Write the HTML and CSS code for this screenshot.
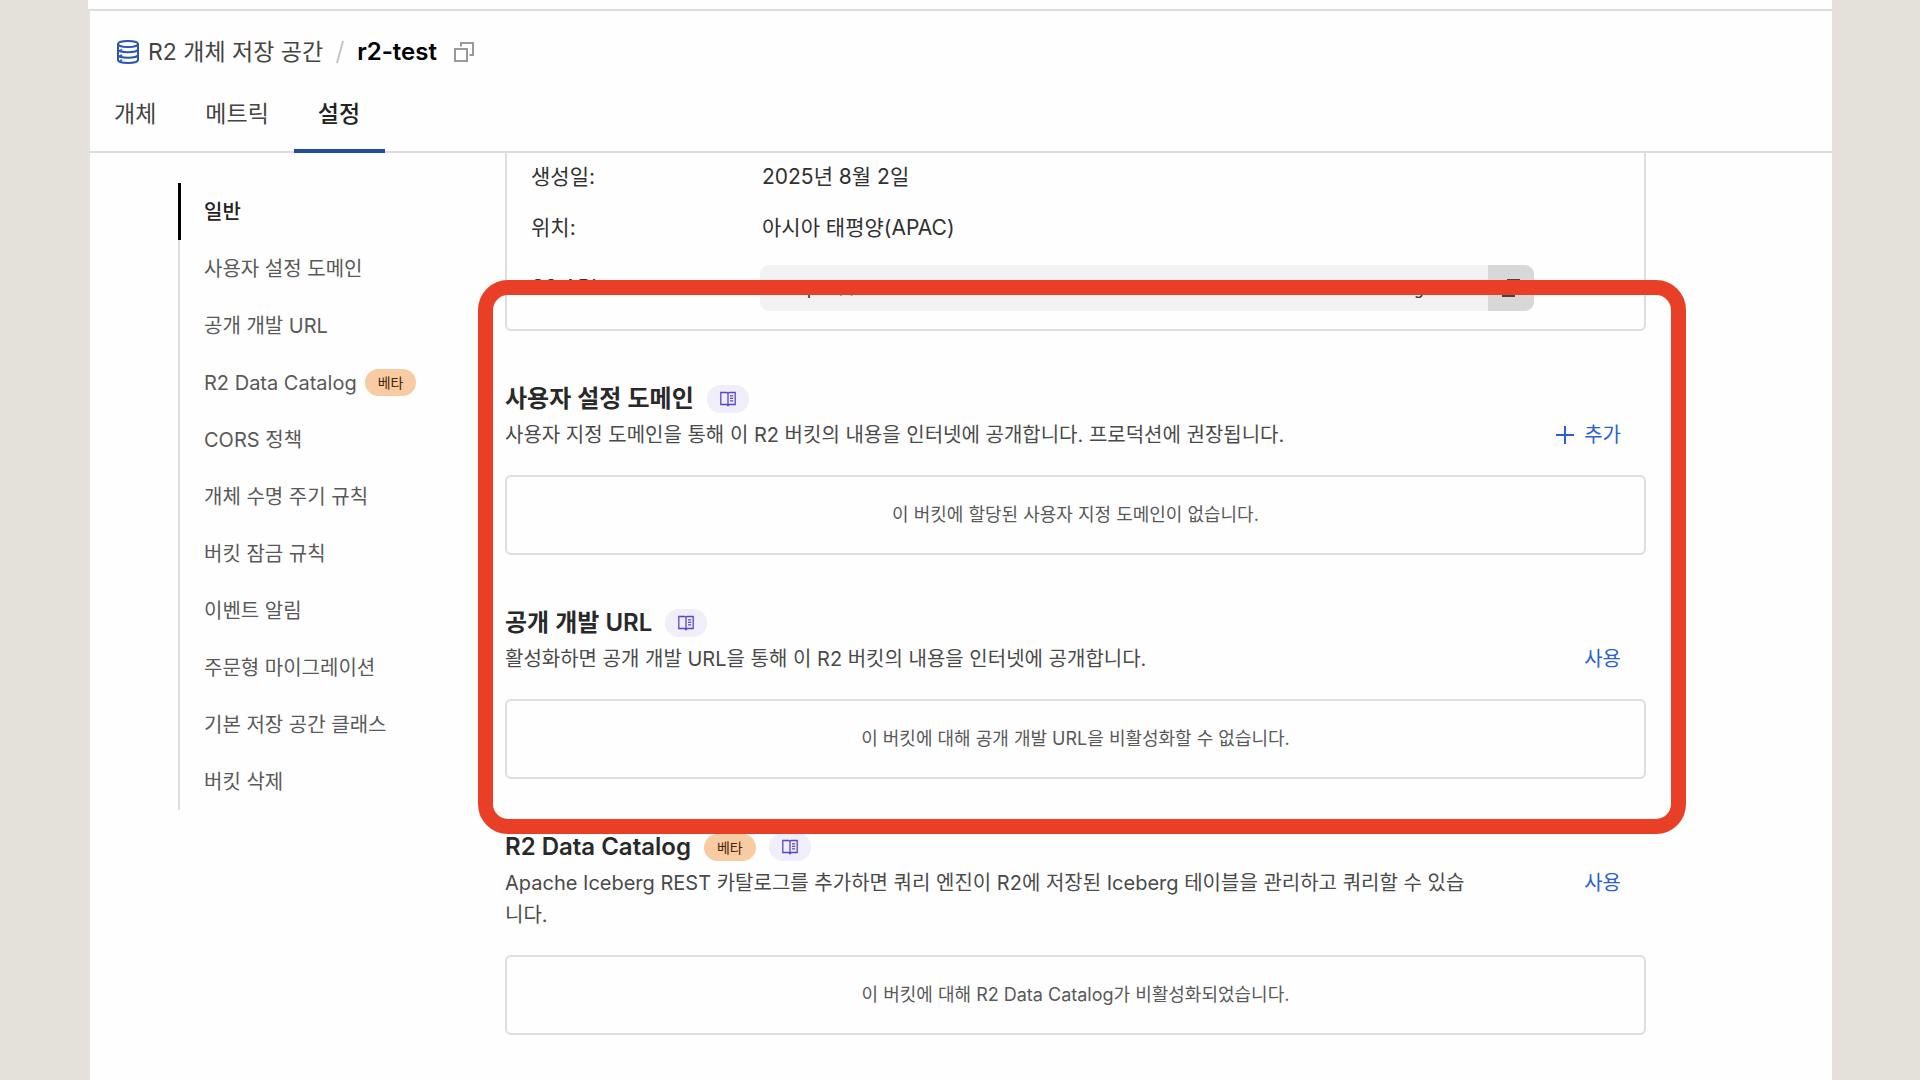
FILE: index.html
```html
<!DOCTYPE html>
<html lang="ko">
<head>
    <meta charset="UTF-8">
    <meta name="viewport" content="width=device-width, initial-scale=1.0">
    <title>r2-test</title>
    <link rel="stylesheet" href="styles.css">
</head>
<body>
    <svg class="sprite" aria-hidden="true">
        <symbol id="book" viewBox="0 0 16 16">
            <path d="M8 2.5 6.8 1.5H.8v12h6L8 14.8l1.200-1.300h6v-12h-6L8 2.500zM8 2.500v12" fill="none" stroke="currentColor" stroke-width="1.300"/>
            <path d="M10 4.800h3.200M10 7.300h3.200M10 9.800h3.200" fill="none" stroke="currentColor" stroke-width="1.200"/>
        </symbol>
    </svg>

    <div class="panel">
        <header class="header">
            <div class="breadcrumb">
                <svg class="db-icon" viewBox="0 0 22 24" aria-hidden="true">
                    <ellipse cx="11" cy="4" rx="10" ry="3"/>
                    <path d="M1 4v16c0 1.700 4.500 3 10 3s10-1.300 10-3V4M1 9.300c0 1.700 4.500 3 10 3s10-1.300 10-3M1 14.700c0 1.700 4.500 3 10 3s10-1.300 10-3"/>
                    <path d="M4.200 9.300v1.500M4.200 14.500v1.500M4.200 19.500v1.500"/>
                </svg>
                <a href="#" class="crumb">R2 개체 저장 공간</a>
                <svg class="slash" viewBox="0 0 8 24" aria-hidden="true"><path d="M7 1 1 23"/></svg>
                <h1>r2-test</h1>
                <button class="copy-name" aria-label="복사">
                    <svg viewBox="0 0 20 20"><path d="M1 7h12v12H1zM7 4.500V1h12v12h-3.500"/></svg>
                </button>
            </div>
            <nav class="tabs">
                <a href="#">개체</a>
                <a href="#">메트릭</a>
                <a href="#" class="active">설정</a>
            </nav>
        </header>

        <div class="layout">
            <nav class="side">
                <a href="#general" class="active">일반</a>
                <a href="#domain">사용자 설정 도메인</a>
                <a href="#dev-url">공개 개발 URL</a>
                <a href="#catalog">R2 Data Catalog <span class="badge">베타</span></a>
                <a href="#cors">CORS 정책</a>
                <a href="#lifecycle">개체 수명 주기 규칙</a>
                <a href="#lock">버킷 잠금 규칙</a>
                <a href="#event">이벤트 알림</a>
                <a href="#migration">주문형 마이그레이션</a>
                <a href="#storage">기본 저장 공간 클래스</a>
                <a href="#delete">버킷 삭제</a>
            </nav>

            <main class="content">
                <dl class="info" id="general">
                    <div class="row created">
                        <dt>생성일:</dt>
                        <dd>2025년 8월 2일</dd>
                    </div>
                    <div class="row">
                        <dt>위치:</dt>
                        <dd>아시아 태평양(APAC)</dd>
                    </div>
                    <div class="row api">
                        <dt>S3 API:</dt>
                        <dd class="endpoint">
                            <code>https://7df1ca371afadb0d099637ea64504b4d.r2.cloudflarestorage</code>
                            <button aria-label="복사">
                                <svg viewBox="0 0 18 18"><path d="M1 5h11v12H1zM6 5V1h11v12h-5"/></svg>
                            </button>
                        </dd>
                    </div>
                </dl>

                <!-- outlined group -->
                <div class="marked">
                    <section id="domain">
                        <div class="title">
                            <h2>사용자 설정 도메인</h2>
                            <a href="#" class="docs" aria-label="문서"><svg><use href="#book"/></svg></a>
                        </div>
                        <div class="desc">
                            <p>사용자 지정 도메인을 통해 이 R2 버킷의 내용을 인터넷에 공개합니다. 프로덕션에 권장됩니다.</p>
                            <button class="action">
                                <svg viewBox="0 0 18 18" aria-hidden="true"><path d="M9 0v18M0 9h18"/></svg>추가
                            </button>
                        </div>
                        <div class="empty">이 버킷에 할당된 사용자 지정 도메인이 없습니다.</div>
                    </section>

                    <section id="dev-url">
                        <div class="title">
                            <h2>공개 개발 URL</h2>
                            <a href="#" class="docs" aria-label="문서"><svg><use href="#book"/></svg></a>
                        </div>
                        <div class="desc">
                            <p>활성화하면 공개 개발 URL을 통해 이 R2 버킷의 내용을 인터넷에 공개합니다.</p>
                            <button class="action">사용</button>
                        </div>
                        <div class="empty">이 버킷에 대해 공개 개발 URL을 비활성화할 수 없습니다.</div>
                    </section>
                </div>

                <section id="catalog">
                    <div class="title">
                        <h2>R2 Data Catalog</h2>
                        <span class="badge">베타</span>
                        <a href="#" class="docs" aria-label="문서"><svg><use href="#book"/></svg></a>
                    </div>
                    <div class="desc">
                        <p>Apache Iceberg REST 카탈로그를 추가하면 쿼리 엔진이 R2에 저장된 Iceberg 테이블을 관리하고 쿼리할 수 있습니다.</p>
                        <button class="action">사용</button>
                    </div>
                    <div class="empty">이 버킷에 대해 R2 Data Catalog가 비활성화되었습니다.</div>
                </section>
            </main>
        </div>
    </div>
</body>
</html>
```
FILE: styles.css
```css
* {
    box-sizing: border-box;
}
body {
    margin: 0;
    background-color: #e4e1da;
    font-family: Inter, "Noto Sans CJK KR", sans-serif;
    font-size: 20px;
    line-height: 32px;
    color: #313131;
}
a {
    color: inherit;
    text-decoration: none;
}
button {
    font: inherit;
    border: none;
    background: none;
    padding: 0;
    cursor: pointer;
}
h1, h2, p, dl, dd {
    margin: 0;
}
svg {
    display: block;
    flex: none;
}
.sprite {
    position: absolute;
    width: 0;
    height: 0;
}
.panel {
    display: flex;
    flex-direction: column;
    min-height: 100vh;
    margin: 0 88px;
    padding-top: 9px;
    background: #fefefe;
}
.header {
    border-top: 2px solid #dcdcdc;
    border-bottom: 2px solid #dcdcdc;
    border-left: 2px solid #e2e2e2;
}
.breadcrumb {
    display: flex;
    align-items: center;
    padding: 25px 27px 0;
    font-size: 23px;
}
.db-icon {
    width: 22px;
    height: 24px;
    margin-right: 9px;
    fill: none;
    stroke: #2a55b5;
    stroke-width: 2;
}
.crumb {
    color: #444;
}
.slash {
    width: 8px;
    height: 24px;
    margin: 0 13px;
    fill: none;
    stroke: #c4c4c4;
    stroke-width: 2;
}
h1 {
    font-size: 24px;
    font-weight: 600;
    color: #000;
}
.copy-name {
    margin-left: 17px;
}
.copy-name svg {
    width: 20px;
    height: 20px;
    fill: none;
    stroke: #999;
    stroke-width: 2;
}
.tabs {
    display: flex;
    font-size: 23px;
    color: #444;
    margin-top: 21px;
}
.tabs a {
    padding: 9px 25px 19px 24px;
}
.tabs .active {
    color: #222;
    font-weight: 500;
    margin-bottom: -2px;
    border-bottom: 4px solid #1f4e9e;
}
.layout {
    display: flex;
    flex: 1;
    padding: 0 186px 46px 88px;
    border-left: 2px solid #e2e2e2;
}
.side {
    flex: none;
    align-self: flex-start;
    width: 327px;
    margin-top: 30px;
    border-left: 2px solid #dedede;
    color: #595959;
}
.side a {
    display: flex;
    align-items: center;
    height: 57px;
    padding-left: 24px;
}
.side .active {
    margin-left: -2px;
    border-left: 3px solid #000;
    padding-left: 23px;
    color: #222;
    font-weight: 500;
}
.badge {
    padding: 0 13px;
    border-radius: 14px;
    background: #f8cba2;
    color: #4a2508;
    font-size: 14px;
    line-height: 27px;
}
.side .badge {
    margin-left: 8px;
}
.content {
    flex: 1;
    min-width: 0;
}
.info {
    padding: 0 24px 8px;
    border: 2px solid #dedede;
    border-top: none;
    border-radius: 0 0 6px 6px;
    font-size: 21px;
}
.row {
    display: flex;
    align-items: center;
    height: 54px;
}
.row dt {
    flex: none;
    width: 231px;
}
.row.created {
    height: 48px;
}
.row.api {
    height: 66px;
}
.endpoint {
    display: flex;
    width: 774px;
    height: 46px;
    margin-left: -2px;
    border-radius: 9px;
    overflow: hidden;
    background: #f2f2f2;
}
.endpoint code {
    flex: 1;
    overflow: hidden;
    padding: 7px 0 0 14px;
    font-family: "DejaVu Sans Mono", monospace;
    font-size: 18px;
    white-space: nowrap;
}
.endpoint button {
    width: 46px;
    background: #d9d8d9;
}
.endpoint svg {
    width: 18px;
    height: 18px;
    margin: 0 auto;
    fill: none;
    stroke: #444;
    stroke-width: 2;
}
/* red frame drawn over the rows around the group */
.marked {
    position: relative;
}
.marked::before {
    content: "";
    position: absolute;
    inset: -51px -40px -55px -27px;
    border: 15px solid #e83f26;
    border-radius: 30px;
    pointer-events: none;
}
section {
    padding-top: 52px;
}
.title {
    display: flex;
    align-items: center;
    gap: 13px;
}
h2 {
    font-size: 24px;
    font-weight: 600;
    line-height: 32px;
    color: #292929;
}
.docs {
    padding: 6px 13px;
    border-radius: 14px;
    background: #f0eefa;
    color: #5a47c2;
}
.docs svg {
    width: 16px;
    height: 16px;
}
.desc {
    display: flex;
    align-items: flex-start;
    justify-content: space-between;
    gap: 88px;
    margin: 4px 0 24px;
}
.desc p {
    color: #4a4a4a;
}
.action {
    display: flex;
    align-items: center;
    flex: none;
    gap: 10px;
    padding: 0 25px;
    color: #2c5fd0;
}
.action svg {
    width: 18px;
    height: 18px;
    stroke: currentColor;
    stroke-width: 2;
}
.empty {
    padding: 22px;
    border: 2px solid #dedede;
    border-radius: 6px;
    font-size: 18px;
    text-align: center;
    color: #595959;
}
```
